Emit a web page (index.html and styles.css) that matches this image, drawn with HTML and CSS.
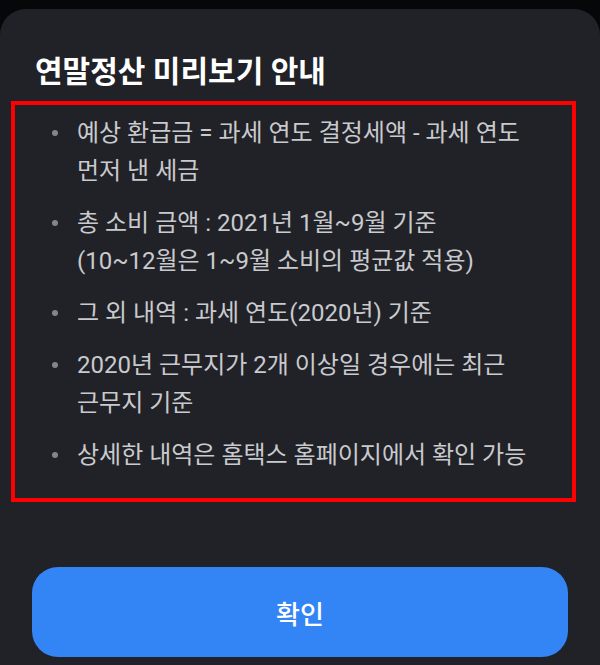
FILE: index.html
```html
<!DOCTYPE html>
<html lang="ko">
<head>
    <meta charset="UTF-8">
    <meta name="viewport" content="width=device-width, initial-scale=1.0">
    <title>연말정산 미리보기 안내</title>
    <link rel="stylesheet" href="styles.css">
</head>
<body>
    <!-- Bottom sheet -->
    <div class="sheet">
        <h1 class="sheet-title">연말정산 미리보기 안내</h1>

        <!-- Notice list -->
        <div class="notice">
            <ul class="notice-list">
                <li>예상 환급금 = 과세 연도 결정세액 - 과세 연도 먼저 낸 세금</li>
                <li>총 소비 금액 : 2021년 1월~9월 기준<br>(10~12월은 1~9월 소비의 평균값 적용)</li>
                <li>그 외 내역 : 과세 연도(2020년) 기준</li>
                <li>2020년 근무지가 2개 이상일 경우에는 최근 근무지 기준</li>
                <li>상세한 내역은 홈택스 홈페이지에서 확인 가능</li>
            </ul>
        </div>

        <button class="confirm-btn">확인</button>
    </div>
</body>
</html>
```

FILE: styles.css
```css
/* General Styles */
body {
    font-family: Roboto, "Noto Sans CJK KR", sans-serif;
    margin: 0;
    padding: 0;
    background-color: #060709;
    overflow: hidden;
}

/* Sheet */
.sheet {
    margin-top: 9px;
    height: 656px;
    background-color: #212228;
    border-radius: 26px 26px 0 0;
    padding-top: 43px;
    box-sizing: border-box;
}

.sheet-title {
    margin: 0 0 0 35px;
    font-size: 30px;
    line-height: 40px;
    font-weight: 700;
    color: #ffffff;
}

/* Notice box */
.notice {
    margin: 9px 24px 0 11px;
    border: 4px solid #ff0000;
    padding: 9px 0 24px 0;
}

.notice-list {
    list-style: none;
    margin: 0;
    padding: 0 34px 0 62px;
}

.notice-list li {
    position: relative;
    font-size: 24px;
    line-height: 38px;
    color: #c9cacd;
    margin-bottom: 14px;
    word-break: keep-all;
}

.notice-list li:last-child {
    margin-bottom: 0;
}

.notice-list li::before {
    content: "";
    position: absolute;
    left: -25px;
    top: 16px;
    width: 6px;
    height: 6px;
    border-radius: 50%;
    background-color: #84858b;
}

/* Confirm button */
.confirm-btn {
    display: block;
    margin: 65px 32px 0 32px;
    width: calc(100% - 64px);
    height: 90px;
    border: none;
    border-radius: 26px;
    background-color: #3384f5;
    color: #ffffff;
    font-family: inherit;
    font-size: 26px;
    font-weight: 500;
}
```
